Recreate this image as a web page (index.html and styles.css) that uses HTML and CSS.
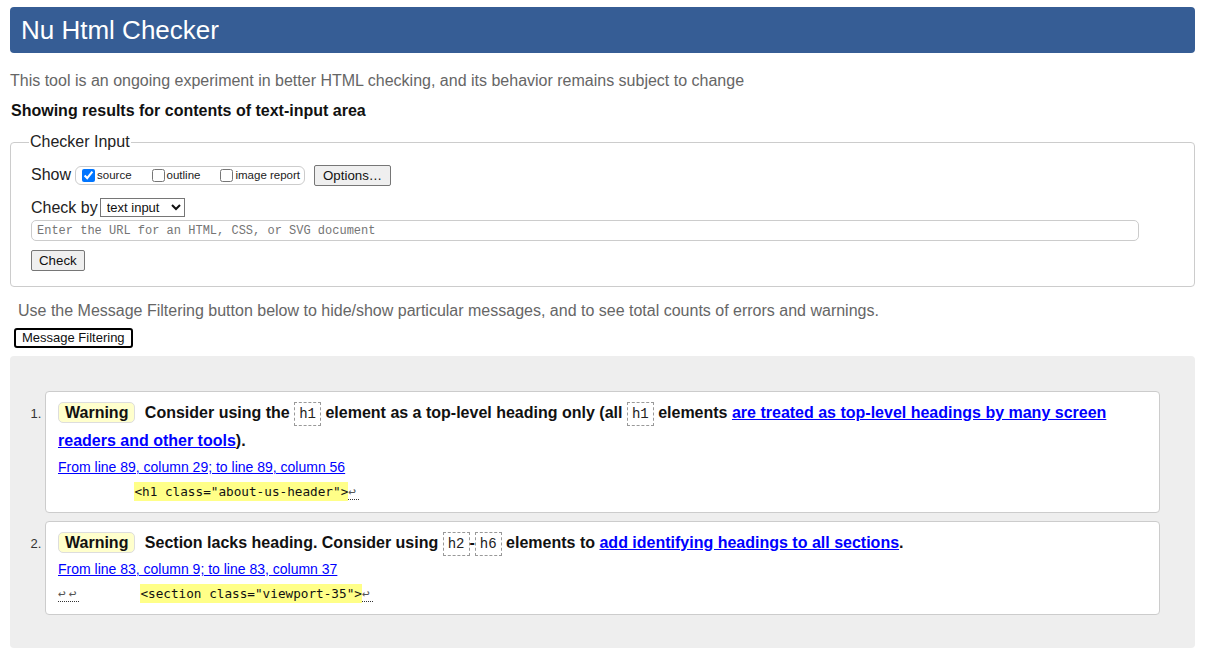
FILE: index.html
```html
<!DOCTYPE html>
<html>
<head>
<meta charset="utf-8">
<link rel="stylesheet" href="styles.css">
</head>
<body>
<h1 class="title">Nu Html Checker</h1>
<p class="intro">This tool is an ongoing experiment in better HTML checking, and its behavior remains subject to change</p>
<p class="showing">Showing results for contents of text-input area</p>
<fieldset class="checker">
  <legend>Checker Input</legend>
  <div class="row show-row">
    <span class="lbl">Show</span>
    <span class="opts">
      <label class="opt"><input type="checkbox" checked> source</label>
      <label class="opt"><input type="checkbox"> outline</label>
      <label class="opt"><input type="checkbox">image report</label>
    </span>
    <button class="btn">Options…</button>
  </div>
  <div class="row by-row">
    <span class="lbl">Check by</span>
    <select class="sel"><option>text input</option></select>
  </div>
  <input class="url" type="text" placeholder="Enter the URL for an HTML, CSS, or SVG document">
  <div class="row"><button class="btn check">Check</button></div>
</fieldset>
<p class="filterinfo">Use the Message Filtering button below to hide/show particular messages, and to see total counts of errors and warnings.</p>
<button class="filterbtn">Message Filtering</button>
<div class="results">
  <ol class="list">
    <li class="msg">
      <p class="text"><span class="badge">Warning</span> Consider using the <code class="el">h1</code> element as a top-level heading only (all <code class="el">h1</code> elements <a href="#">are treated as top-level headings by many screen readers and other tools</a>).</p>
      <p class="loc"><a href="#">From line 89, column 29; to line 89, column 56</a></p>
      <p class="extract"><code>          <b class="hl">&lt;h1 class="about-us-header"&gt;</b><span class="lf">↩</span></code></p>
    </li>
    <li class="msg">
      <p class="text"><span class="badge">Warning</span> Section lacks heading. Consider using <code class="el">h2</code>-<code class="el">h6</code> elements to <a href="#">add identifying headings to all sections</a>.</p>
      <p class="loc"><a href="#">From line 83, column 9; to line 83, column 37</a></p>
      <p class="extract"><code><span class="lf">↩↩</span>        <b class="hl">&lt;section class="viewport-35"&gt;</b><span class="lf">↩</span></code></p>
    </li>
  </ol>
</div>
</body>
</html>
```

FILE: styles.css
```css
html, body {
  margin: 0;
  padding: 0;
  background: #fff;
}
body {
  font-family: "Liberation Sans", Arial, sans-serif;
  color: #111;
  padding: 7px 13px 0 10px;
}
.title {
  margin: 0;
  height: 46px;
  background: #365d95;
  color: #fff;
  font-weight: normal;
  font-size: 26px;
  line-height: 46px;
  padding: 0 11px;
  border-radius: 4px;
}
.intro {
  margin: 18px 0 0;
  font-size: 16px;
  line-height: 20px;
  color: #666;
}
.showing {
  margin: 10px 0 0 1px;
  font-size: 16px;
  font-weight: bold;
  line-height: 20px;
  color: #111;
}
.checker {
  margin: 12px 0 0;
  border: 1px solid #ccc;
  border-radius: 4px;
  padding: 4px 20px 15px 20px;
}
.checker legend {
  font-size: 16px;
  color: #222;
  padding: 0 1px;
  margin-left: -2px;
  line-height: 18px;
}
.row {
  display: flex;
  align-items: center;
}
.lbl {
  font-size: 16px;
  color: #222;
}
.show-row {
  margin-top: 9px;
  height: 22px;
}
.opts {
  display: inline-flex;
  align-items: center;
  margin-left: 4px;
  border: 1px solid #ccc;
  border-radius: 6px;
  height: 17px;
  padding: 0 4px 0 2px;
}
.opt {
  display: inline-flex;
  align-items: center;
  font-size: 11.5px;
  color: #222;
  margin-right: 16px;
}
.opt:last-child { margin-right: 0; }
.opt input {
  margin: 0 2px 0 4px;
  width: 13px;
  height: 13px;
}
.btn {
  font-family: "Liberation Sans", Arial, sans-serif;
  font-size: 13.3px;
  background: #efefef;
  border: 1px solid #767676;
  border-radius: 2px;
  color: #111;
  padding: 1px 8px;
  height: 21px;
  margin-left: 9px;
}
.by-row {
  margin-top: 12px;
}
.sel {
  font-family: "Liberation Sans", Arial, sans-serif;
  font-size: 13px;
  margin-left: 2px;
  height: 19px;
  width: 85px;
  border: 1px solid #767676;
  border-radius: 0;
  background: #fff;
  color: #111;
  padding: 0 2px;
}
.url {
  display: block;
  box-sizing: border-box;
  margin-top: 3px;
  width: 1108px;
  height: 21px;
  border: 1px solid #ccc;
  border-radius: 5px;
  padding: 0 5px;
  font-family: "Liberation Mono", monospace;
  font-size: 12px;
}
.url::placeholder { color: #757575; }
.check {
  margin: 9px 0 0 0;
  padding: 1px 7px;
}
.filterinfo {
  margin: 14px 0 0 8px;
  font-size: 16px;
  line-height: 20px;
  color: #666;
}
.filterbtn {
  margin: 7px 0 0 4px;
  font-family: "Liberation Sans", Arial, sans-serif;
  font-size: 13px;
  background: #fff;
  color: #111;
  border: 2px solid #000;
  border-radius: 3px;
  height: 20px;
  padding: 0 6px;
  line-height: 14px;
}
.results {
  margin-top: 8px;
  background: #eee;
  border-radius: 4px;
  padding: 35px 35px 33px 35px;
}
.list {
  margin: 0;
  padding: 0;
  list-style-position: outside;
}
.msg {
  background: #fff;
  border: 1px solid #ccc;
  border-radius: 4px;
  padding: 7px 12px 10px 12px;
  margin-bottom: 8px;
  font-size: 13px;
  color: #333;
}
.msg:last-child { margin-bottom: 0; }
.msg::marker {
  font-size: 13px;
  color: #333;
}
.text {
  margin: 0;
  font-size: 16px;
  font-weight: bold;
  line-height: 28px;
  color: #111;
}
.badge {
  display: inline-block;
  background: #ffc;
  border: 1px solid #ddd;
  border-radius: 5px;
  padding: 0 6px;
  line-height: 19px;
  margin-right: 5px;
}
.el {
  font-family: "Liberation Mono", "DejaVu Sans Mono", monospace;
  font-weight: normal;
  font-size: 14px;
  line-height: 16px;
  border: 1px dashed #999;
  padding: 3px 4px;
  color: #222;
}
.text a { color: #00f; }
.loc {
  margin: 3px 0 0;
  font-size: 14px;
  line-height: 18px;
}
.loc a { color: #00f; }
.extract {
  margin: 6px 0 0;
  line-height: 20px;
}
.extract code {
  font-family: "DejaVu Sans Mono", monospace;
  font-size: 12.7px;
  white-space: pre;
  color: #111;
}
.hl {
  background: #ff8;
  font-weight: normal;
  padding: 2px 0;
}
.lf {
  color: #555;
  letter-spacing: 3px;
  border-bottom: 1px dotted #333;
}
```
